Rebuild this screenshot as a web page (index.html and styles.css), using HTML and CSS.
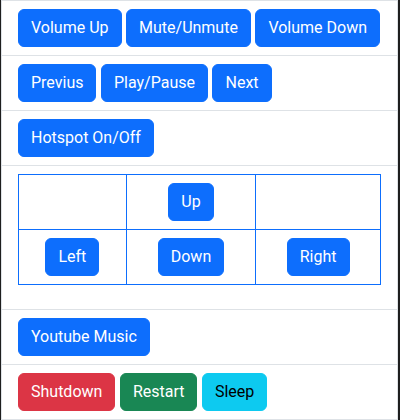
FILE: index.html
```html
<!DOCTYPE html>
<html lang="en">
<head>
<meta charset="utf-8">
<title>Remote</title>
<link rel="stylesheet" href="styles.css">
</head>
<body>
<div class="frame">
  <ul class="list">
    <li class="item">
      <button class="btn btn-primary">Volume Up</button>
      <button class="btn btn-primary">Mute/Unmute</button>
      <button class="btn btn-primary">Volume Down</button>
    </li>
    <li class="item">
      <button class="btn btn-primary">Previus</button>
      <button class="btn btn-primary">Play/Pause</button>
      <button class="btn btn-primary">Next</button>
    </li>
    <li class="item">
      <button class="btn btn-primary">Hotspot On/Off</button>
    </li>
    <li class="item item-table">
      <table class="pad">
        <colgroup>
          <col class="c1"><col class="c2"><col class="c3">
        </colgroup>
        <tr>
          <td></td>
          <td><button class="btn btn-primary">Up</button></td>
          <td></td>
        </tr>
        <tr>
          <td><button class="btn btn-primary">Left</button></td>
          <td><button class="btn btn-primary">Down</button></td>
          <td><button class="btn btn-primary">Right</button></td>
        </tr>
      </table>
    </li>
    <li class="item">
      <button class="btn btn-primary">Youtube Music</button>
    </li>
    <li class="item">
      <button class="btn btn-danger">Shutdown</button>
      <button class="btn btn-success">Restart</button>
      <button class="btn btn-info">Sleep</button>
    </li>
  </ul>
</div>
</body>
</html>
```
FILE: styles.css
```css
html, body {
  margin: 0;
  padding: 0;
  background: #ffffff;
}
body {
  font-family: Roboto, "Liberation Sans", sans-serif;
  font-size: 16px;
  line-height: 1.5;
  color: #212529;
}
.frame {
  border-left: 1px solid #1e1e1e;
  border-right: 2px solid #1e1e1e;
  height: 420px;
  box-sizing: border-box;
}
.list {
  list-style: none;
  margin: 0;
  padding: 0;
  border: 1px solid #dee2e6;
}
.item {
  display: flex;
  gap: 4.5px;
  padding: 8px 16px;
  border-top: 1px solid #dee2e6;
}
.item:first-child {
  border-top: 0;
}
.item-table {
  display: block;
}
.btn {
  font-family: inherit;
  font-size: 16px;
  line-height: 24px;
  padding: 6px 12px;
  border: 1px solid transparent;
  border-radius: 6px;
  color: #ffffff;
  cursor: pointer;
  margin: 0;
}
.btn-primary {
  background: #0d6efd;
  border-color: #0d6efd;
}
.btn-danger {
  background: #dc3545;
  border-color: #dc3545;
}
.btn-success {
  background: #198754;
  border-color: #198754;
}
.btn-info {
  background: #0dcaf0;
  border-color: #0dcaf0;
  color: #000000;
}
.pad {
  width: 100%;
  border-collapse: collapse;
  table-layout: fixed;
  margin-bottom: 16px;
}
.pad td {
  border: 1px solid #0d6efd;
  padding: 8px;
  text-align: center;
  vertical-align: middle;
  height: 38px;
}
.c1 { width: 29.75%; }
.c2 { width: 35.8%; }
.c3 { width: 34.45%; }
```
